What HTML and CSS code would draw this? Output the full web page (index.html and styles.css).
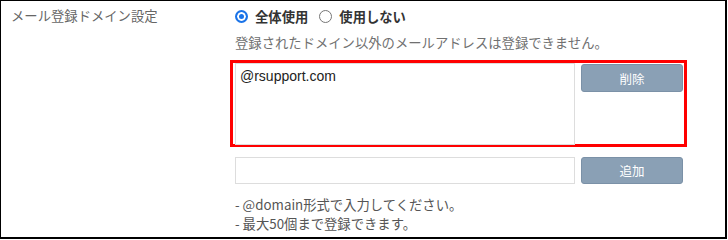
FILE: index.html
```html
<!DOCTYPE html>
<html lang="ja">
<head>
<meta charset="utf-8">
<link rel="stylesheet" href="styles.css">
</head>
<body>
<div class="panel">
  <div class="label">メール登録ドメイン設定</div>
  <div class="content">
    <div class="radios">
      <label class="radio-item"><input type="radio" name="mode" checked><span>全体使用</span></label>
      <label class="radio-item"><input type="radio" name="mode"><span>使用しない</span></label>
    </div>
    <p class="desc">登録されたドメイン以外のメールアドレスは登録できません。</p>
    <div class="highlight">
      <div class="list">@rsupport.com</div>
      <button class="btn">削除</button>
    </div>
    <div class="add-row">
      <input class="domain-input" type="text">
      <button class="btn">追加</button>
    </div>
    <ul class="notes">
      <li>- @domain形式で入力してください。</li>
      <li>- 最大50個まで登録できます。</li>
    </ul>
  </div>
</div>
</body>
</html>
```
FILE: styles.css
```css
* { box-sizing: border-box; }
html, body {
  margin: 0;
  padding: 0;
  background: #fff;
}
body {
  font-family: "Noto Sans CJK JP", "Noto Sans", sans-serif;
  font-size: 13.33px;
  color: #555;
}
.panel {
  width: 727px;
  height: 239px;
  border-style: solid;
  border-color: #000;
  border-width: 1px 2px 2px 1px;
  display: grid;
  grid-template-columns: 229px 1fr;
}
.label {
  padding: 5px 0 0 10px;
  line-height: 20px;
  color: #666;
}
.content {
  padding-top: 5px;
}
.radios {
  display: flex;
  align-items: center;
  height: 20px;
  padding-left: 5px;
}
.radio-item {
  display: flex;
  align-items: center;
  margin-right: 11px;
  font-weight: bold;
  color: #333;
}
.radio-item span { margin-left: 7px; }
.radio-item input {
  appearance: none;
  -webkit-appearance: none;
  width: 13px;
  height: 13px;
  margin: 0;
  border: 1px solid #767676;
  border-radius: 50%;
  background: #fff;
}
.radio-item input:checked {
  border: 2px solid #1a73e8;
  background: #1a73e8;
  box-shadow: inset 0 0 0 2px #fff;
}
.desc {
  margin: 7px 0 0;
  padding-left: 5px;
  line-height: 20px;
  color: #707070;
}
.highlight {
  margin-top: 7px;
  width: 457px;
  height: 87px;
  border: 3px solid #f00;
  display: flex;
  align-items: flex-start;
  gap: 6px;
  padding-left: 2px;
}
.list {
  width: 340px;
  height: 82px;
  border: 1px solid #ddd;
  padding: 3px 4px;
  font-family: "Liberation Sans", Arial, sans-serif;
  font-size: 14px;
  line-height: 18px;
  color: #222;
}
.btn {
  width: 102px;
  height: 28px;
  margin-top: 1px;
  border: 1px solid #7b91a7;
  border-radius: 3px;
  background: #8aa0b5;
  color: #fff;
  font-family: "Noto Sans CJK JP", sans-serif;
  font-size: 12.5px;
  padding: 0;
}
.add-row {
  margin-top: 10px;
  display: flex;
  gap: 6px;
  padding-left: 5px;
}
.add-row .btn {
  height: 27px;
  margin-top: 0;
}
.domain-input {
  width: 340px;
  height: 27px;
  border: 1px solid #ddd;
  margin: 0;
}
.notes {
  list-style: none;
  margin: 11px 0 0;
  padding-left: 5px;
  line-height: 19px;
  color: #555;
}
```
